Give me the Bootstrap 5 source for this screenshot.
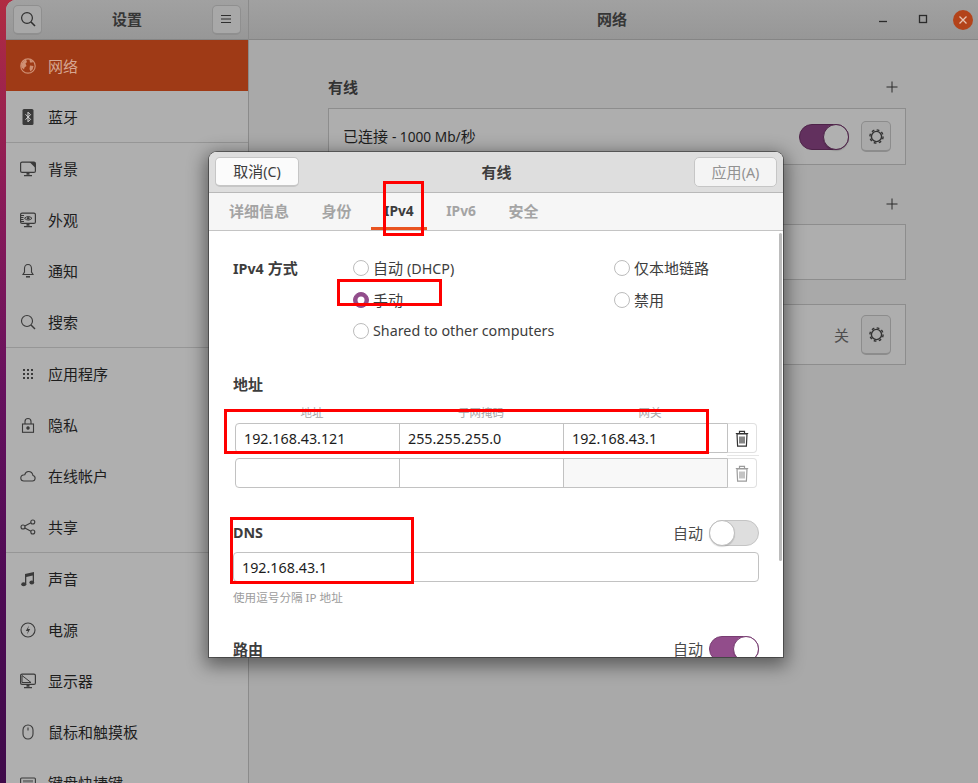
<!DOCTYPE html>
<html lang="zh">
<head>
    <meta charset="utf-8">
    <link href="https://cdn.jsdelivr.net/npm/bootstrap@5.3.0/dist/css/bootstrap.min.css" rel="stylesheet">
    <style>
        html, body { height: 783px; overflow: hidden; }
        body {
            font-family: "Noto Sans", "Noto Sans CJK SC", sans-serif;
            font-size: 15px;
            line-height: 22px;
            color: #1d1d1d;
            background: linear-gradient(180deg, #b02c42 0%, #8a1a58 25%, #66105e 50%, #4e0a54 75%, #3f0a4a 100%);
            padding-left: 6px;
        }
        .lat { font-size: 14.3px; }
        .lat-sm { font-size: 13.7px; }
        .app-window { width: 972px; height: 783px; border-top-left-radius: 10px; overflow: hidden; position: relative; background: #a9a9a9; }

        /* sidebar */
        .side-pane { width: 243px; flex: none; background: #afafaf; border-right: 1px solid #8b8b8b; height: 783px; }
        .side-head, .main-head { height: 40px; background: linear-gradient(180deg, #a1a1a1, #979797); border-bottom: 1px solid #858585; }
        .side-head { padding: 0 7px; }
        .head-title { font-weight: 700; color: #363636; font-size: 15px; line-height: 20px; padding-bottom: 1px; }
        .head-btn { width: 29px; height: 30px; padding: 0; background: #a8a8a8; border: 1px solid #8f8f8f; border-bottom-width: 2px; border-radius: 5px; --bs-btn-hover-bg: #a8a8a8; }
        .side-list { --bs-list-group-bg: transparent; --bs-list-group-border-width: 0; border-radius: 0; }
        .side-item { height: 51px; padding: 0 0 0 14px; color: #1d1d1d; background: transparent; gap: 12px; flex-direction: row; }
        .side-item.on { background: #9f3a16; color: #d6a692; }
        .side-item svg { width: 16px; height: 16px; flex: none; color: #3a3a3a; }
        .side-item.on svg { color: #cf8f73; }
        .side-sep { height: 1px; background: #969696; }

        /* main pane */
        .main-pane { flex: 1; min-width: 0; }
        .main-head { padding: 0 5px 0 0; position: relative; }
        .main-title { position: absolute; left: 348px; }
        .wm-ico { width: 16px; height: 16px; color: #2b2b2b; }
        .wm-close { width: 20px; height: 20px; background: #b3431a; border-radius: 50%; color: #e8c4b4; margin-left: -2px; }
        .main-body { padding: 36px 72px 0 79px; }
        .sec-head { height: 22px; font-weight: 700; color: #333; margin-bottom: 10px; }
        .sec-head.next { margin-bottom: 9px; }
        .net-box { background: #aeaeae; border: 1px solid #8d8d8d; padding: 0 14px; }
        .box-a { height: 57px; margin-bottom: 28px; }
        .box-b { height: 56px; margin-bottom: 24px; }
        .box-c { height: 61px; }
        .box-gap { margin-left: 12px; }
        .gear-btn { width: 30px; height: 31px; padding: 0; background: #a9a9a9; border: 1px solid #8c8c8c; border-bottom-width: 2px; border-radius: 5px; color: #333; }
        .gear-btn svg { width: 17px; height: 17px; }
        .box-c .gear-btn { height: 40px; }
        .off-txt { color: #4d4d4d; }

        /* switches */
        .sw { width: 50px; height: 26px; border-radius: 13px; position: relative; flex: none; border: 1px solid #c4c4c4; background: #dedede; }
        .sw::after { content: ""; position: absolute; top: -1px; width: 26px; height: 26px; border-radius: 50%; background: #fff; border: 1px solid #bdbdbd; left: -1px; box-shadow: 0 1px 1px rgba(0,0,0,.15); }
        .sw.on { background: #924d8b; border-color: #783d72; }
        .sw.on::after { left: auto; right: -1px; border-color: #783d72; }
        .sw.on.dim { background: #62305e; border-color: #4e2349; }
        .sw.on.dim::after { background: #b0b0b0; border-color: #4e2349; }

        /* dialog */
        .net-dialog { position: absolute; left: 203px; top: 152px; width: 574px; height: 505px; background: #fff; border-radius: 8px 8px 0 0; overflow: hidden; color: #3d3d3d; }
        .dlg-wrap { position: absolute; left: 203px; top: 152px; width: 574px; height: 505px; border-radius: 8px 8px 0 0; box-shadow: 0 0 0 1px rgba(40,40,40,.55), 0 5px 18px 4px rgba(0,0,0,.45); }
        .dlg-head { height: 41px; background: #dedede; border-bottom: 1px solid #b9b9b9; padding: 0 6px; }
        .dlg-title { color: #3d3d3d; }
        .dlg-btn { width: 84px; height: 30px; padding: 0; font-size: 15px; line-height: 26px; color: #3d3d3d; background: #fbfbfb; border: 1px solid #c6c6c6; border-bottom-width: 2px; border-radius: 5px; }
        .dlg-btn.off { width: 83px; background: #f4f4f4; color: #929292; border-bottom-width: 1px; opacity: 1; }
        .dlg-tabs { height: 38px; background: #f6f6f6; border-bottom: 1px solid #c4c4c4; padding: 0 0 0 7px; --bs-nav-link-padding-x: 13px; --bs-nav-link-padding-y: 0; gap: 6.5px; flex-wrap: nowrap; }
        .dlg-tabs .nav-link { line-height: 36px; height: 37px; font-weight: 700; color: #a4a4a4; font-size: 15px; border-bottom: 3px solid transparent; white-space: nowrap; }
        .dlg-tabs .nav-link.lat { font-size: 13.8px; }
        .dlg-tabs .nav-link.active { color: #3d3d3d; border-bottom-color: #e95420; background: transparent; }
        .dlg-body { padding: 21px 24px 0; position: relative; }
        .dlg-scroll { position: absolute; right: 1px; top: 2px; width: 3px; height: 328px; background: #bcbcbc; border-radius: 2px; }
        .mode-grid { display: grid; grid-template-columns: 120px 261px 1fr; grid-template-rows: 32px 31px 31px; align-items: center; }
        .bold-lbl { font-weight: 700; color: #3d3d3d; }
        .rad { display: flex; align-items: center; gap: 4px; white-space: nowrap; }
        .rad .form-check-input { width: 16px; height: 16px; margin: 0; flex: none; border: 1px solid #bcbcbc; background-color: #fff; }
        .rad .form-check-input:checked { background-color: #924d8b; border-color: #924d8b; }
        .addr-title { margin-top: 27px; height: 22px; }
        .addr-cols { margin: 10px 0 2px -5.5px; width: 507px; height: 16px; line-height: 16px; font-size: 11.5px; color: #a6a6a6; text-align: center; }
        .addr-cols > div { width: 169px; }
        .addr-row { margin-left: 2px; width: 522px; height: 30px; flex-wrap: nowrap; }
        .addr-row > .addr-cell { width: 165px; flex: 0 0 165px; height: 30px; padding: 0 8px; font-size: 14.3px; line-height: 29px; color: #1c1c1c; border-color: #c2c2c2; border-radius: 4px; white-space: nowrap; }
        .addr-row > .addr-cell:not(:first-child) { border-radius: 0; }
        .addr-row > .addr-cell:first-child { border-top-right-radius: 0; border-bottom-right-radius: 0; }
        .addr-row > .addr-cell.ro { background: #f8f8f8; }
        .addr-gap { height: 5px; margin-left: 2px; width: 524px; background: linear-gradient(#e6e6e6, #e6e6e6) no-repeat right 2px / 32px 1px; }
        .del-btn { width: 30px; padding: 0; border: 1px solid #e0e0e0; border-left-color: #c2c2c2; border-radius: 0 4px 4px 0; background: #fff; color: #333; display: flex; align-items: center; justify-content: center; }
        .del-btn svg { width: 14px; height: 17px; }
        .del-btn.off { color: #9c9c9c; }
        .dns-row { margin-top: 32px; height: 26px; }
        .dns-input { margin-top: 6px; height: 30px; padding: 0 8px; font-size: 14.3px; line-height: 29px; color: #1c1c1c; border-color: #c2c2c2; border-radius: 4px; }
        .dns-hint { margin-top: 8px; height: 16px; line-height: 16px; font-size: 11.6px; color: #9c9c9c; }
        .route-row { margin-top: 30px; height: 26px; }
        .auto-lbl { margin-right: 6px; color: #4a4a4a; }

        /* red annotation frames drawn over the screenshot */
        .mark-box { position: absolute; border: 3px solid #f00; pointer-events: none; }
        .mk-tab { left: 377px; top: 181px; width: 41px; height: 55px; }
        .mk-radio { left: 331px; top: 279px; width: 105px; height: 27px; }
        .mk-addr { left: 218px; top: 409px; width: 485px; height: 45px; }
        .mk-dns { left: 224px; top: 517px; width: 184px; height: 67px; }
    </style>
</head>
<body>
<div class="app-window d-flex">
    <div class="side-pane">
        <div class="side-head d-flex align-items-center justify-content-between">
            <button class="btn head-btn d-flex align-items-center justify-content-center">
                <svg width="16" height="16" viewBox="0 0 16 16" fill="none" stroke="#2f2f2f" stroke-width="1.2"><circle cx="7" cy="7" r="5.4"/><path d="M11 11l4 4" stroke-width="1.6"/></svg>
            </button>
            <span class="head-title">设置</span>
            <button class="btn head-btn d-flex align-items-center justify-content-center">
                <svg width="12" height="12" viewBox="0 0 12 12" stroke="#2f2f2f" stroke-width="1"><path d="M1 2.5h10M1 6h10M1 9.5h10"/></svg>
            </button>
        </div>
        <div class="list-group list-group-flush side-list">
            <a class="list-group-item side-item on d-flex align-items-center">
                <svg viewBox="0 0 16 16"><circle cx="8" cy="8" r="7.2" fill="none" stroke="currentColor" stroke-width="1.200"/><path fill="currentColor" d="M3.500 3l2.500-1.500L7 4 5.500 5.500 6.500 8 4.500 9.500 4 11.500 1.500 9.500 1 7zM9.500 1.500l3.500 1.500-.5 1.500-2.500 0zM10 7.500l3.500.5-.8 3.200-2.200 2.300-1-2.500z"/></svg>
                网络
            </a>
            <a class="list-group-item side-item d-flex align-items-center">
                <svg viewBox="0 0 16 16"><rect x="2.500" width="11" height="16" rx="1.500" fill="currentColor"/><path d="M5.500 5.300l5 5L8 12.800V3.200l2.500 2.500-5 5" fill="none" stroke="#d8d8d8" stroke-width="1"/></svg>
                蓝牙
            </a>
            <div class="side-sep"></div>
            <a class="list-group-item side-item d-flex align-items-center">
                <svg viewBox="0 0 16 16"><rect x=".6" y="1.100" width="14.800" height="10.300" rx="1.500" fill="none" stroke="currentColor" stroke-width="1.200"/><path d="M9.500 1h5.500v5.500z" fill="currentColor"/><path d="M6.500 12h3v1.800h-3zM4 14h8v1.200H4z" fill="currentColor"/></svg>
                背景
            </a>
            <a class="list-group-item side-item d-flex align-items-center">
                <svg viewBox="0 0 16 16"><rect x=".6" y="1.100" width="14.800" height="10.300" rx="1.500" fill="none" stroke="currentColor" stroke-width="1.200"/><path d="M1 3.500h3M1 5.500h2.500M1 7.500h2.500M1 9.500h3" stroke="currentColor"/><path d="M4.500 6.300q3.700-3.600 7.500 0-3.800 3.600-7.500 0z" fill="none" stroke="currentColor"/><circle cx="8.200" cy="6.300" r="1.300" fill="currentColor"/><path d="M6.500 12h3v1.800h-3zM4 14h8v1.200H4z" fill="currentColor"/></svg>
                外观
            </a>
            <a class="list-group-item side-item d-flex align-items-center">
                <svg viewBox="0 0 16 16" fill="none" stroke="currentColor" stroke-width="1.100"><path d="M8 1.500c-2.500 0-3.500 2-3.500 4v3.500L3 11.500h10L11.500 9V5.500c0-2-1-4-3.500-4z"/><path d="M6 13.800h4" stroke-width="1.500"/></svg>
                通知
            </a>
            <a class="list-group-item side-item d-flex align-items-center">
                <svg viewBox="0 0 16 16" fill="none" stroke="currentColor" stroke-width="1.100"><circle cx="7" cy="7" r="5.500"/><path d="M11 11l4 4" stroke-width="1.400"/></svg>
                搜索
            </a>
            <div class="side-sep"></div>
            <a class="list-group-item side-item d-flex align-items-center">
                <svg viewBox="0 0 16 16" fill="currentColor"><rect x="3" y="3" width="2" height="2"/><rect x="7" y="3" width="2" height="2"/><rect x="11" y="3" width="2" height="2"/><rect x="3" y="7" width="2" height="2"/><rect x="7" y="7" width="2" height="2"/><rect x="11" y="7" width="2" height="2"/><rect x="3" y="11" width="2" height="2"/><rect x="7" y="11" width="2" height="2"/><rect x="11" y="11" width="2" height="2"/></svg>
                应用程序
            </a>
            <a class="list-group-item side-item d-flex align-items-center">
                <svg viewBox="0 0 16 16" fill="none" stroke="currentColor" stroke-width="1.100"><rect x="2.500" y="7" width="11" height="8.300" /><path d="M5 7V4.500a3 3 0 0 1 6 0V7"/><circle cx="8" cy="11" r="1.200" fill="currentColor"/></svg>
                隐私
            </a>
            <a class="list-group-item side-item d-flex align-items-center">
                <svg viewBox="0 0 16 16" fill="none" stroke="currentColor" stroke-width="1.100"><path d="M4 13h8.500a2.800 2.800 0 0 0 .5-5.500C12.500 5 10.500 3.500 8.500 3.500 6.500 3.500 5.200 5 4.800 6.700 2.500 6.800.8 8.200.8 10c0 1.800 1.400 3 3.200 3z"/></svg>
                在线帐户
            </a>
            <a class="list-group-item side-item d-flex align-items-center">
                <svg viewBox="0 0 16 16" fill="none" stroke="currentColor" stroke-width="1.100"><circle cx="3" cy="8" r="2"/><circle cx="12.800" cy="3" r="2"/><circle cx="12.800" cy="13" r="2"/><path d="M4.800 7l6.200-3.200M4.800 9l6.200 3.200"/></svg>
                共享
            </a>
            <div class="side-sep"></div>
            <a class="list-group-item side-item d-flex align-items-center">
                <svg viewBox="0 0 16 16" fill="currentColor"><path d="M5 3l9-2v10.500h-1.300V4.500L6.300 5.900V13.500H5z"/><ellipse cx="3.700" cy="13.300" rx="2.500" ry="2"/><ellipse cx="11.800" cy="11.500" rx="2.400" ry="2"/></svg>
                声音
            </a>
            <a class="list-group-item side-item d-flex align-items-center">
                <svg viewBox="0 0 16 16"><circle cx="8" cy="8" r="7" fill="none" stroke="currentColor" stroke-width="1.100"/><path d="M9 3.500L5.800 9H8l-1 3.500L10.200 7H8z" fill="currentColor"/></svg>
                电源
            </a>
            <a class="list-group-item side-item d-flex align-items-center">
                <svg viewBox="0 0 16 16"><rect x=".6" y="1.100" width="14.800" height="10.300" rx="1.500" fill="none" stroke="currentColor" stroke-width="1.200"/><path d="M2 2.500l9 7H2z" fill="none" stroke="currentColor"/><path d="M6.500 12h3v1.800h-3zM4 14h8v1.200H4z" fill="currentColor"/></svg>
                显示器
            </a>
            <a class="list-group-item side-item d-flex align-items-center">
                <svg viewBox="0 0 16 16" fill="none" stroke="currentColor" stroke-width="1.100"><rect x="3" y="1" width="10" height="14" rx="5"/><path d="M8 3.500v3"/></svg>
                鼠标和触摸板
            </a>
            <a class="list-group-item side-item d-flex align-items-center">
                <svg viewBox="0 0 16 16" fill="none" stroke="currentColor" stroke-width="1.100"><rect x=".6" y="3" width="14.800" height="10" rx="1"/><path d="M3 6h10M3 8.200h10M5 10.500h6"/></svg>
                键盘快捷键
            </a>
        </div>
    </div>

    <div class="main-pane">
        <div class="main-head d-flex align-items-center justify-content-end">
            <span class="head-title main-title">网络</span>
            <div class="d-flex align-items-center" style="gap: 24px">
                <svg class="wm-ico" viewBox="0 0 16 16" stroke="currentColor" stroke-width="1.300"><path d="M4 9.500h8"/></svg>
                <svg class="wm-ico" viewBox="0 0 16 16" fill="none" stroke="currentColor" stroke-width="1.300"><rect x="4.500" y="3.500" width="7" height="7"/></svg>
                <div class="wm-close d-flex align-items-center justify-content-center">
                    <svg width="10" height="10" viewBox="0 0 10 10" stroke="currentColor" stroke-width="1.300"><path d="M1.500 1.500l7 7M8.500 1.500l-7 7"/></svg>
                </div>
            </div>
        </div>
        <div class="main-body">
            <div class="sec-head d-flex align-items-center justify-content-between">
                <span>有线</span>
                <svg class="me-2" width="12" height="12" viewBox="0 0 12 12" stroke="#2b2b2b" stroke-width="1"><path d="M6 .5v11M.5 6h11"/></svg>
            </div>
            <div class="net-box box-a d-flex align-items-center">
                <span class="me-auto">已连接 <span class="lat-sm">- 1000 Mb/</span>秒</span>
                <div class="sw on dim"></div>
                <button class="btn gear-btn box-gap d-flex align-items-center justify-content-center">
                    <svg viewBox="0 0 18 18" fill="none" stroke="currentColor"><circle cx="9" cy="9" r="5.400" stroke-width="1.500"/><circle cx="9" cy="9" r="7" stroke-width="1.500" stroke-dasharray="2.900 2.600"/></svg>
                </button>
            </div>
            <div class="sec-head next d-flex align-items-center justify-content-end">
                <svg class="me-2" width="12" height="12" viewBox="0 0 12 12" stroke="#2b2b2b" stroke-width="1"><path d="M6 .5v11M.5 6h11"/></svg>
            </div>
            <div class="net-box box-b"></div>
            <div class="net-box box-c d-flex align-items-center justify-content-end">
                <span class="off-txt">关</span>
                <button class="btn gear-btn box-gap d-flex align-items-center justify-content-center">
                    <svg viewBox="0 0 18 18" fill="none" stroke="currentColor"><circle cx="9" cy="9" r="5.400" stroke-width="1.500"/><circle cx="9" cy="9" r="7" stroke-width="1.500" stroke-dasharray="2.900 2.600"/></svg>
                </button>
            </div>
        </div>
    </div>

    <div class="dlg-wrap"></div>
    <div class="net-dialog">
        <div class="dlg-head d-flex align-items-center justify-content-between">
            <button class="btn dlg-btn">取消<span class="lat">(C)</span></button>
            <span class="head-title dlg-title">有线</span>
            <button class="btn dlg-btn off">应用<span class="lat">(A)</span></button>
        </div>
        <ul class="nav dlg-tabs">
            <li class="nav-item"><a class="nav-link">详细信息</a></li>
            <li class="nav-item"><a class="nav-link">身份</a></li>
            <li class="nav-item"><a class="nav-link active lat">IPv4</a></li>
            <li class="nav-item"><a class="nav-link lat">IPv6</a></li>
            <li class="nav-item"><a class="nav-link">安全</a></li>
        </ul>
        <div class="dlg-body">
            <div class="dlg-scroll"></div>
            <div class="mode-grid">
                <div class="bold-lbl"><span class="lat">IPv4</span> 方式</div>
                <label class="rad"><input class="form-check-input" type="radio" name="ipm"><span>自动 <span class="lat">(DHCP)</span></span></label>
                <label class="rad"><input class="form-check-input" type="radio" name="ipm">仅本地链路</label>
                <div></div>
                <label class="rad"><input class="form-check-input" type="radio" name="ipm" checked>手动</label>
                <label class="rad"><input class="form-check-input" type="radio" name="ipm">禁用</label>
                <div></div>
                <label class="rad lat"><input class="form-check-input" type="radio" name="ipm">Shared to other computers</label>
            </div>

            <div class="bold-lbl addr-title">地址</div>
            <div class="addr-cols d-flex">
                <div>地址</div><div>子网掩码</div><div>网关</div>
            </div>
            <div class="input-group addr-row">
                <div class="form-control addr-cell">192.168.43.121</div>
                <div class="form-control addr-cell">255.255.255.0</div>
                <div class="form-control addr-cell">192.168.43.1</div>
                <button class="btn del-btn">
                    <svg viewBox="0 0 14 17" fill="none" stroke="currentColor" stroke-width="1.200"><path d="M.8 3.500h12.400M4.500 3V1.300h5V3"/><path d="M2 3.800l.6 12.400h8.800L12 3.800z"/><path d="M5 6.500v7M7 6.500v7M9 6.500v7"/></svg>
                </button>
            </div>
            <div class="addr-gap"></div>
            <div class="input-group addr-row">
                <div class="form-control addr-cell"></div>
                <div class="form-control addr-cell"></div>
                <div class="form-control addr-cell ro"></div>
                <button class="btn del-btn off">
                    <svg viewBox="0 0 14 17" fill="none" stroke="currentColor" stroke-width="1.200"><path d="M.8 3.500h12.400M4.500 3V1.300h5V3"/><path d="M2 3.800l.6 12.400h8.800L12 3.800z"/><path d="M5 6.500v7M7 6.500v7M9 6.500v7"/></svg>
                </button>
            </div>

            <div class="dns-row d-flex align-items-center justify-content-between">
                <span class="bold-lbl lat">DNS</span>
                <div class="d-flex align-items-center"><span class="auto-lbl">自动</span><div class="sw"></div></div>
            </div>
            <div class="form-control dns-input">192.168.43.1</div>
            <div class="dns-hint">使用逗号分隔 IP 地址</div>

            <div class="route-row d-flex align-items-center justify-content-between">
                <span class="bold-lbl">路由</span>
                <div class="d-flex align-items-center"><span class="auto-lbl">自动</span><div class="sw on"></div></div>
            </div>
        </div>
    </div>

    <div class="mark-box mk-tab"></div>
    <div class="mark-box mk-radio"></div>
    <div class="mark-box mk-addr"></div>
    <div class="mark-box mk-dns"></div>
</div>
<script src="https://cdn.jsdelivr.net/npm/bootstrap@5.3.0/dist/js/bootstrap.bundle.min.js"></script>
</body>
</html>
